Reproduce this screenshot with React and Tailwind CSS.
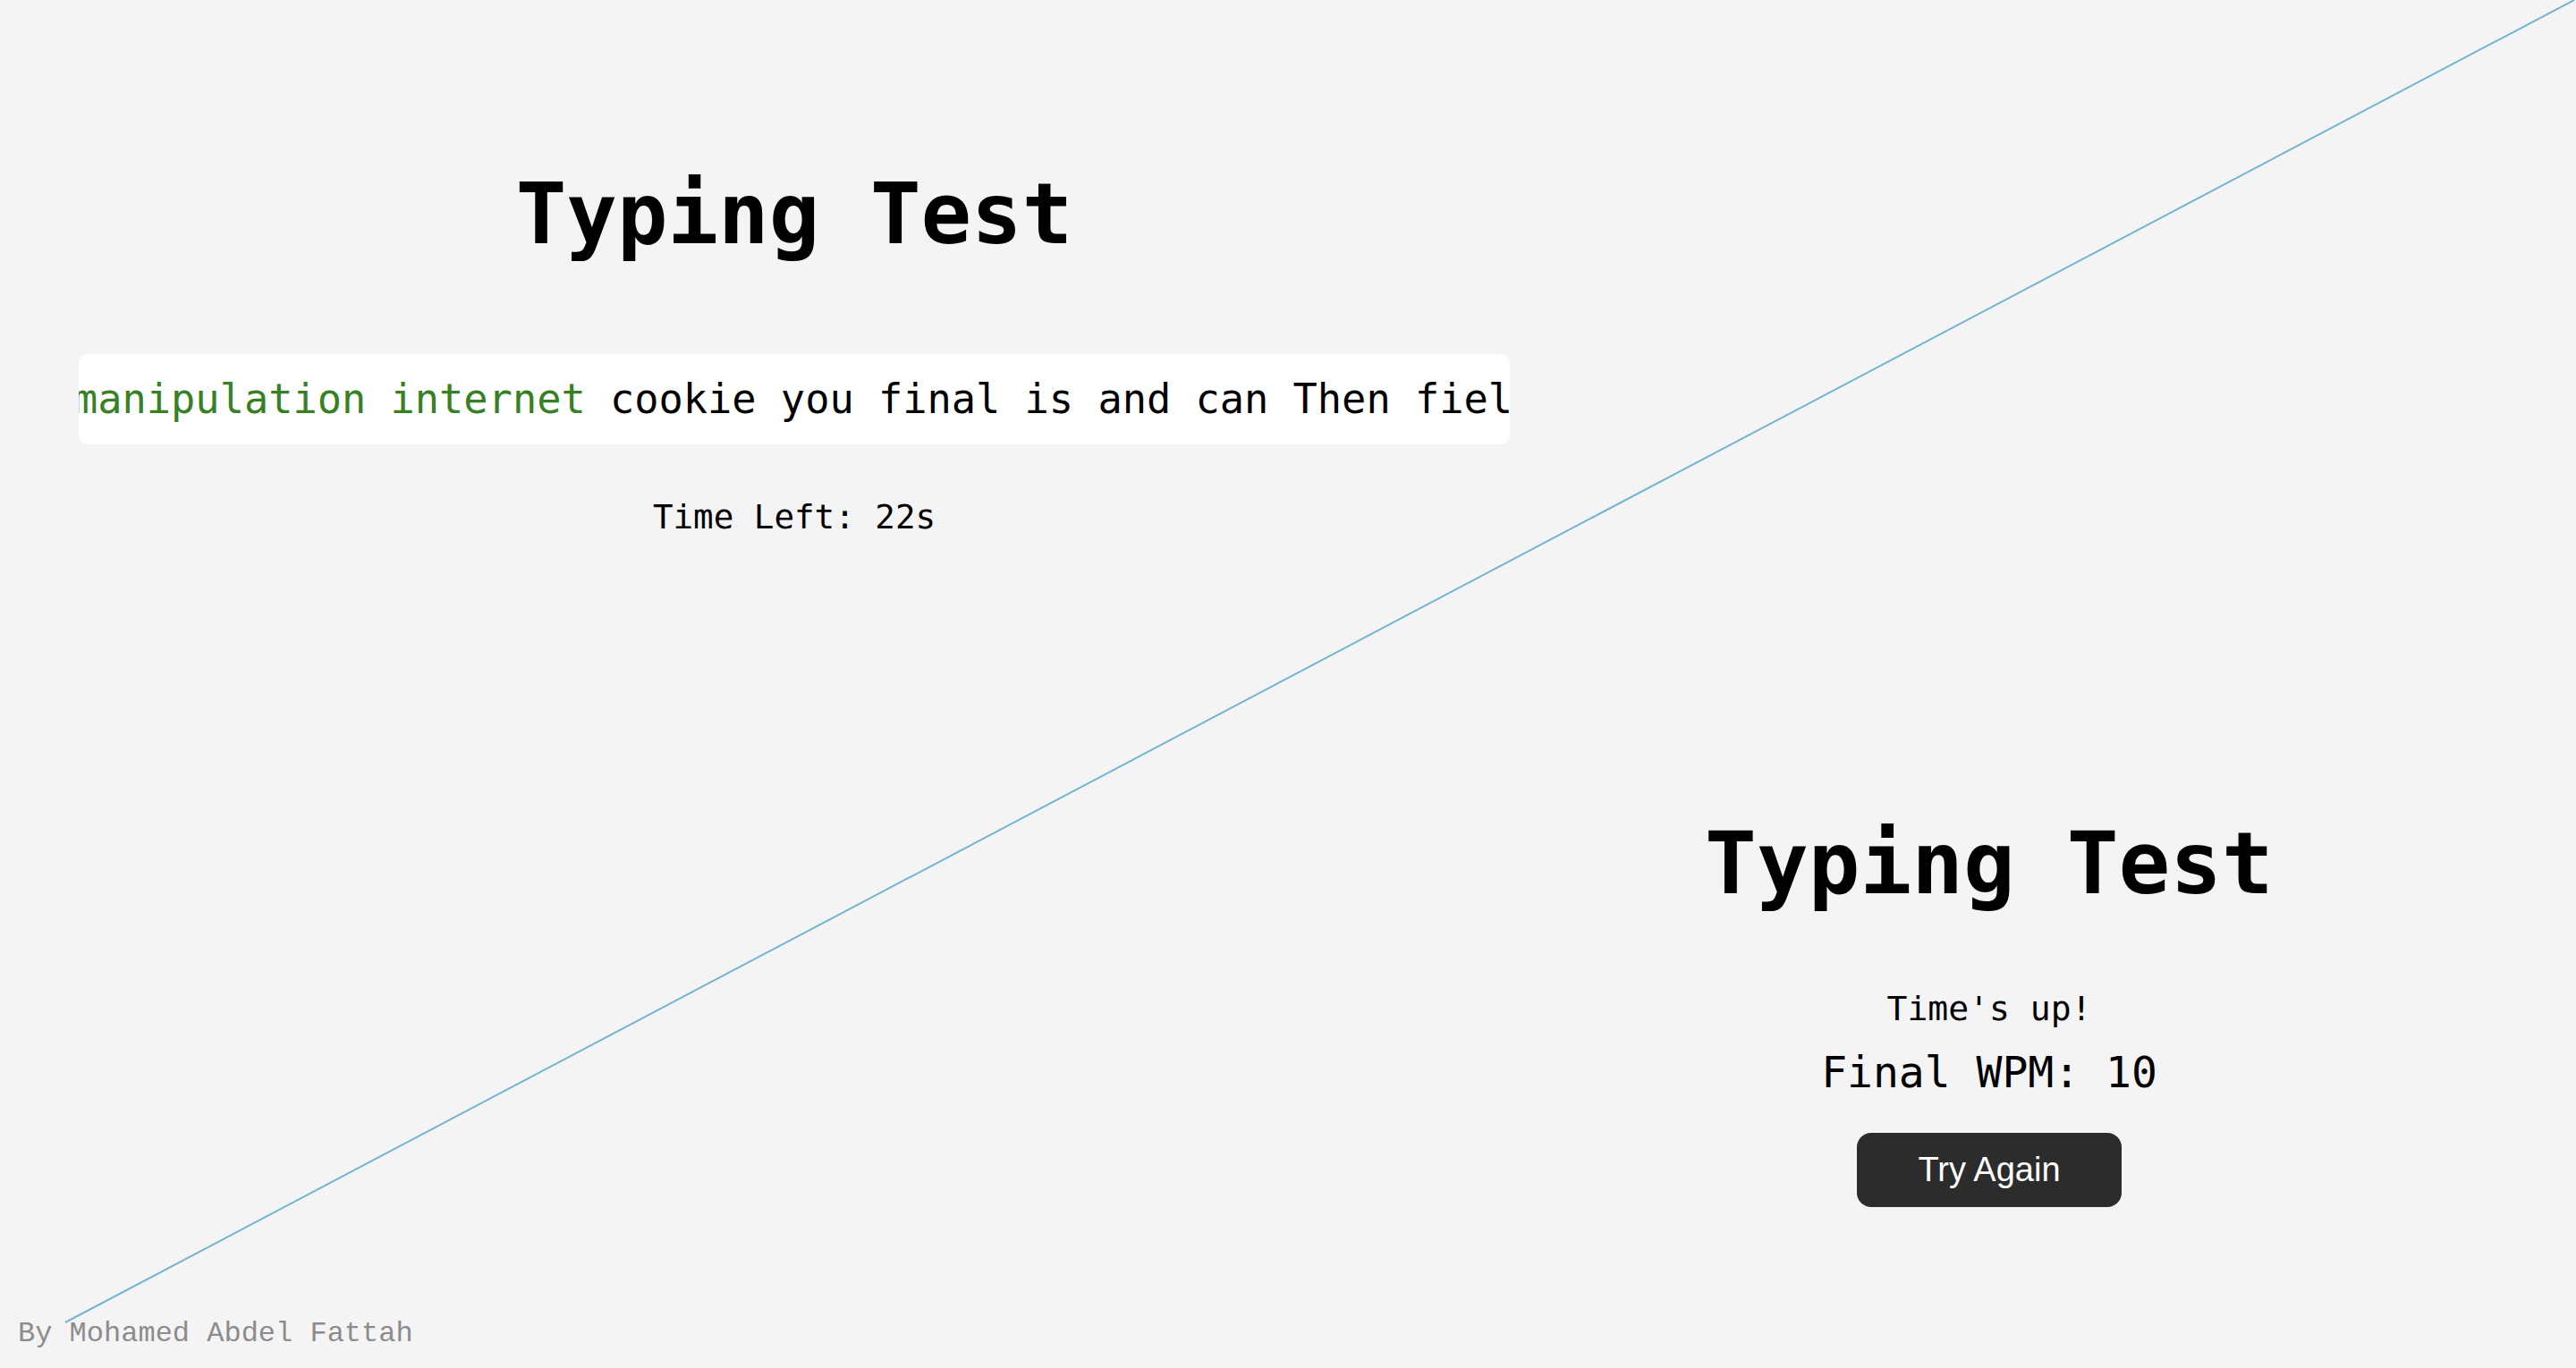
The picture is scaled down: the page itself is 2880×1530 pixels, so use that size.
import React from "react";

export default function App() {
  return (
    <div className="relative w-full h-[1530px] bg-[#f4f4f4] flex flex-col overflow-hidden font-['DejaVu_Sans_Mono',monospace] text-black">
      <div className="flex flex-1 min-h-0">
        <div className="w-[1776px] flex flex-col items-center pt-[193px]">
          <h1 className="text-[94px] leading-[94px] font-bold">Typing Test</h1>
          <div className="mt-[109px] w-[1600px] bg-white rounded-[10px] overflow-hidden py-[28px]">
            <div className="whitespace-nowrap text-[45.3px] leading-[45px] ml-[-6px]">
              <span className="text-[#378024]">manipulation internet</span>
              <span> cookie you final is and can Then field of the web</span>
            </div>
          </div>
          <p className="mt-[62px] text-[37.5px] leading-[38px]">Time Left: 22s</p>
        </div>
        <div className="w-[896px] flex flex-col items-center pt-[918px]">
          <h1 className="text-[96px] leading-[96px] font-bold">Typing Test</h1>
          <p className="mt-[95px] text-[38px] leading-[38px]">Time's up!</p>
          <p className="mt-[28px] text-[48px] leading-[48px]">Final WPM: 10</p>
          <button className="mt-[44px] bg-[#2c2c2c] text-white rounded-[16px] px-[68px] py-[20px] text-[38px] leading-[43px] font-['Liberation_Sans',Arial,sans-serif]">
            Try Again
          </button>
        </div>
      </div>
      <div className="pl-[20px] pb-[20px] text-[32px] leading-[36px] text-[#8c8c8c] font-['Liberation_Mono','Courier_New',monospace]">
        By Mohamed Abdel Fattah
      </div>
      <svg
        className="absolute inset-0 pointer-events-none"
        width="2880"
        height="1530"
        viewBox="0 0 2880 1530"
      >
        <line x1="2878" y1="0" x2="73" y2="1479" stroke="#76b4d3" strokeWidth="2" />
      </svg>
    </div>
  );
}
